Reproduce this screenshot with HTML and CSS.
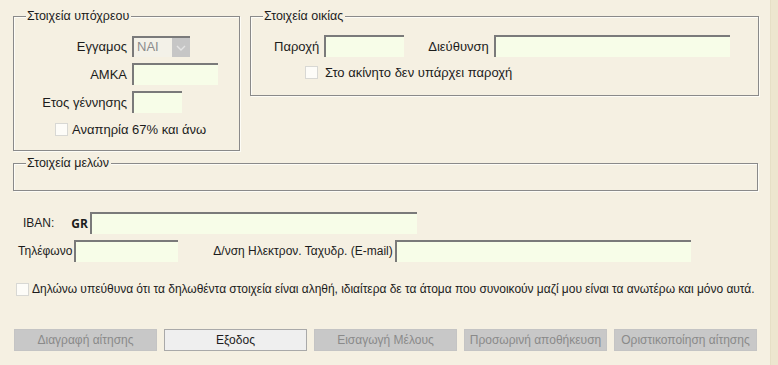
FILE: index.html
```html
<!DOCTYPE html>
<html lang="el">
  <head>
    <meta charset="UTF-8" />
    <meta name="viewport" content="width=device-width, initial-scale=1.0" />
    <title>Αίτηση</title>
    <link rel="stylesheet" href="styles.css">
  </head>
  <body>
    <div class="page">
      <div class="top-row">
        <section class="box box-obligor">
          <span class="caption">Στοιχεία υπόχρεου</span>
          <div class="form-grid">
            <label class="lbl">Εγγαμος</label>
            <div class="select">
              <span class="select-value">NAI</span>
              <span class="select-btn">
                <svg width="10" height="6" viewBox="0 0 10 6"><path d="M1 1 L5 5 L9 1" fill="none" stroke="#e4e4e4" stroke-width="1.4"/></svg>
              </span>
            </div>
            <label class="lbl">ΑΜΚΑ</label>
            <input class="field w-amka" type="text" />
            <label class="lbl">Ετος γέννησης</label>
            <input class="field w-year" type="text" />
          </div>
          <div class="check-row check-disability">
            <span class="check"></span>
            <span>Αναπηρία 67% και άνω</span>
          </div>
        </section>

        <section class="box box-home">
          <span class="caption">Στοιχεία οικίας</span>
          <div class="home-row">
            <label class="lbl">Παροχή</label>
            <input class="field w-supply" type="text" />
            <label class="lbl lbl-address">Διεύθυνση</label>
            <input class="field w-address" type="text" />
          </div>
          <div class="check-row check-supply">
            <span class="check"></span>
            <span>Στο ακίνητο δεν υπάρχει παροχή</span>
          </div>
        </section>
      </div>

      <section class="box box-members">
        <span class="caption">Στοιχεία μελών</span>
      </section>

      <div class="lower">
        <div class="line iban-row">
          <label class="lbl">IBAN:</label>
          <span class="gr">GR</span>
          <input class="field w-iban" type="text" />
        </div>

        <div class="line contact-row">
          <label class="lbl">Τηλέφωνο</label>
          <input class="field w-phone" type="text" />
          <label class="lbl lbl-email">Δ/νση Ηλεκτρον. Ταχυδρ. (E-mail)</label>
          <input class="field w-email" type="text" />
        </div>

        <div class="check-row check-declare">
          <span class="check"></span>
          <span class="declare-text">Δηλώνω υπεύθυνα ότι τα δηλωθέντα στοιχεία είναι αληθή, ιδιαίτερα δε τα άτομα που συνοικούν μαζί μου είναι τα ανωτέρω και μόνο αυτά.</span>
        </div>

        <div class="actions">
          <button type="button" class="btn" disabled>Διαγραφή αίτησης</button>
          <button type="button" class="btn btn-active">Εξοδος</button>
          <button type="button" class="btn" disabled>Εισαγωγή Μέλους</button>
          <button type="button" class="btn" disabled>Προσωρινή αποθήκευση</button>
          <button type="button" class="btn" disabled>Οριστικοποίηση αίτησης</button>
        </div>
      </div>
    </div>
    <div class="side-strip"></div>
  </body>
</html>
```

FILE: styles.css
```css
body {
  margin: 0;
  font-family: "Liberation Sans", Arial, sans-serif;
  font-size: 13px;
  color: #1c1c1c;
  background-color: #f5f0e2;
  width: 778px;
  height: 365px;
  overflow: hidden;
  display: flex;
}
.page {
  width: 770px;
  padding: 16px 0 0 13px;
  box-sizing: border-box;
}
.side-strip {
  width: 7px;
  background-color: #ede6cf;
  border-left: 1px solid #e6dfc6;
}
.top-row {
  display: flex;
  gap: 10px;
}
.box {
  position: relative;
  border: 1px solid #8a8a8a;
  box-shadow: inset 1px 1px 0 #fdfcf6, 1px 1px 0 #fdfcf6;
  box-sizing: border-box;
}
.caption {
  position: absolute;
  top: -8px;
  left: 12px;
  padding: 0 2px 0 1px;
  font-size: 12.5px;
  line-height: 14px;
  background-color: #f5f0e2;
}
.box-obligor {
  width: 227px;
  height: 135px;
}
.box-home {
  width: 509px;
  height: 80px;
}
.box-members {
  width: 745px;
  height: 28px;
  margin-top: 12px;
}
.form-grid {
  display: grid;
  grid-template-columns: 104px auto;
  column-gap: 5px;
  row-gap: 6px;
  align-items: center;
  padding: 19px 0 0 9px;
}
.lbl {
  text-align: right;
  white-space: nowrap;
}
.field {
  height: 22px;
  box-sizing: border-box;
  border: none;
  border-top: 2px solid #7a7a7a;
  border-left: 2px solid #7a7a7a;
  background-color: #f7fde8;
  padding: 0 3px;
  font: inherit;
  outline: none;
}
.select {
  width: 58px;
  height: 21px;
  box-sizing: border-box;
  border-top: 2px solid #7a7a7a;
  border-left: 2px solid #7a7a7a;
  background-color: #f3f1e8;
  display: flex;
  justify-content: space-between;
}
.select-value {
  color: #8c8c8c;
  padding: 1px 0 0 3px;
}
.select-btn {
  width: 18px;
  background-color: #c6c6c6;
  display: flex;
  align-items: center;
  justify-content: center;
}
.w-amka { width: 86px; }
.w-year { width: 50px; }
.w-supply { width: 80px; }
.w-address { width: 236px; }
.w-iban { width: 327px; }
.w-phone { width: 104px; }
.w-email { width: 296px; }
.check-row {
  display: flex;
  align-items: center;
  gap: 4px;
  white-space: nowrap;
}
.check {
  width: 11px;
  height: 11px;
  flex: none;
  background-color: #fdfcf8;
  border: 1px solid #d8d8d4;
}
.check-disability {
  margin: 9px 0 0 41px;
}
.home-row {
  display: flex;
  align-items: center;
  padding: 18px 0 0 23px;
}
.home-row .field {
  margin-left: 5px;
}
.lbl-address {
  margin-left: 24px;
}
.check-supply {
  margin: 8px 0 0 54px;
  gap: 7px;
}
.lower {
  font-size: 12px;
}
.line {
  display: flex;
  align-items: center;
}
.iban-row {
  margin-top: 21px;
  padding-left: 10px;
}
.gr {
  font-family: "Open Sans", sans-serif;
  font-weight: bold;
  font-size: 12px;
  margin-left: 17px;
  margin-right: 2px;
}
.contact-row {
  margin-top: 6px;
  padding-left: 5px;
}
.contact-row .field {
  margin-left: 2px;
}
.lbl-email {
  margin-left: 35px;
}
.check-declare {
  margin: 20px 0 0 3px;
  gap: 3px;
}
.declare-text {
  letter-spacing: -0.03px;
}
.actions {
  display: flex;
  gap: 7px;
  margin-top: 33px;
  padding-left: 1px;
}
.btn {
  width: 143px;
  height: 22px;
  border: 1px solid #c4c4c4;
  background-color: #c8c8c8;
  color: #8a8a8a;
  font: inherit;
  padding: 0;
  white-space: nowrap;
}
.btn-active {
  background-color: #efefef;
  border-color: #a9a9a9;
  color: #1c1c1c;
}
```
